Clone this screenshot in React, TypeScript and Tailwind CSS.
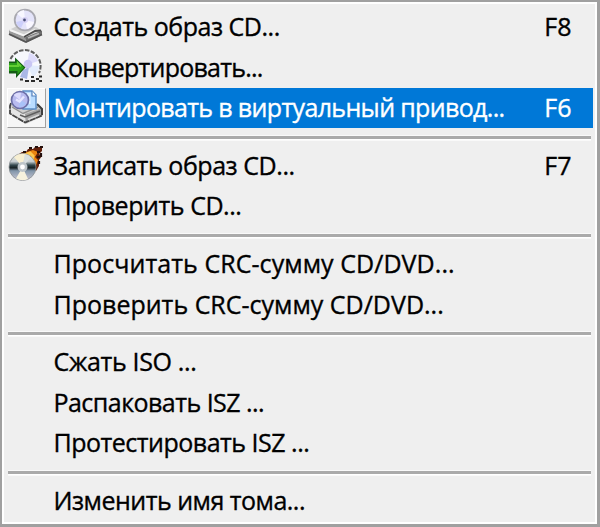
import type { ReactNode } from 'react';
import clsx from 'clsx';

interface MenuItem {
  label: string;
  shortcut?: string;
  icon?: ReactNode;
  active?: boolean;
  tracking?: string;
}

function DriveIcon() {
  return (
    <svg viewBox="0 0 36 36" className="w-9 h-9">
      <path d="M1 22 L9 18 L28 19 L34 23 V27 L18 35 L1 26 Z" fill="#cfcfcf" />
      <path d="M1 22.5 L17 29 V34.5 L1 27 Z" fill="#9a9a9a" />
      <path d="M17 29.5 L34 22.5 V27 L18 34.5 Z" fill="#6e6e6e" />
      <path d="M2 22 L16 27.5 L27 22" fill="none" stroke="#f4f4f4" strokeWidth="2" />
      <path d="M16 29 L27 23 L33 22.5" fill="none" stroke="#4c4c4c" strokeWidth="1.8" />
      <path d="M1 26 L18 34 L34 26.5" fill="none" stroke="#555" strokeWidth="1.8" />
      <path d="M20 30 L31 25.5" stroke="#b8b8b8" strokeWidth="1.8" />
      <circle cx="17" cy="12" r="10.3" fill="#e4e4fa" stroke="#a9a9b0" strokeWidth="1.8" />
      <path d="M17 12 L9 6 A10 10 0 0 1 16 2 Z" fill="#f7f7ff" />
      <path d="M17 12 L19 21 A10 10 0 0 0 26 14 Z" fill="#f9f7ff" />
      <path d="M17 12 L8 14 A9 9 0 0 0 13 20 Z" fill="#cdd0fb" />
      <circle cx="17" cy="12" r="3" fill="#d8d3f6" />
      <circle cx="16.5" cy="12" r="1.4" fill="#4a5078" />
    </svg>
  );
}

function ConvertIcon() {
  return (
    <svg viewBox="0 0 36 36" className="w-9 h-9">
      <circle cx="18" cy="17" r="15" fill="#f7f8fd" />
      <path d="M2.5 11 A15.5 15.5 0 0 1 31 25" fill="none" stroke="#5f5f5f" strokeWidth="2" strokeDasharray="4.5 1.4" />
      <path d="M19 17 L21 5 A13 13 0 0 1 30 13 Z" fill="#dedcfb" />
      <path d="M19 17 L31 18 A14 14 0 0 1 25 29 Z" fill="#e3ecfc" />
      <path d="M15 22 L21 19 L19 31 L12 29 Z" fill="#aab8e6" />
      <circle cx="20" cy="16" r="4.3" fill="#c9c6f4" />
      <path d="M1 13.5 H7 V9.5 L17.5 19.5 L8 30 V25.5 H1 Z" fill="#145c16" />
      <path d="M1 15 H8.5 V12.5 L16 19.5 L9.5 26.5 V23 H1 Z" fill="#2a9f19" />
      <path d="M1 18 H10 V15.5 L13 18.5" fill="none" stroke="#62cf33" strokeWidth="2" />
      <path d="M12 31.5 H15 M17 33 H21 M23 29 H26 M23 33 H27 M31 28.5 H34 M31 33 H34 M28 31 H31" stroke="#2b2b2b" strokeWidth="2" />
    </svg>
  );
}

function MountIcon() {
  return (
    <svg viewBox="0 0 36 36" className="w-9 h-9">
      <path d="M2 16 L12 12 L30 15 L35 20 V27 L18 35 L2 25 Z" fill="#cfcfcf" />
      <path d="M2 17 L17 25 V33 L2 25 Z" fill="#e4e4e4" />
      <path d="M17 25 L34 19 V27 L18 34 Z" fill="#a2a2a2" />
      <path d="M3 14 L2 17 V24.5 L17 33.5 L34 26.5" fill="none" stroke="#444" strokeWidth="1.8" strokeDasharray="6 0.7" />
      <path d="M29 15 L34 20 V26" fill="none" stroke="#3f3f3f" strokeWidth="2" />
      <path d="M4 18 L15 24.5 L30 18" fill="none" stroke="#8f8f8f" strokeWidth="1.4" />
      <path d="M12 26 L17 28 L32 22" fill="none" stroke="#5f5f5f" strokeWidth="1.5" />
      <path d="M20 30.5 L31 26" fill="none" stroke="#ddd" strokeWidth="1.5" />
      <path d="M15 2 H24 L28 6 V20 L15 20 Z" fill="#b9dcff" stroke="#5c8dc6" strokeWidth="1.4" />
      <path d="M19 4 H22.5 V15 H19 Z" fill="#e2f1ff" />
      <path d="M24 2 V7 H28" fill="#fff" stroke="#5580bb" strokeWidth="1.2" />
      <circle cx="12" cy="11" r="8.5" fill="#b9bbef" stroke="#6c6ea6" strokeWidth="1.7" />
      <path d="M12 11 L5.5 6 A8 8 0 0 1 13 4 Z" fill="#dcdbfc" />
      <path d="M12 11 L18 14 A7 7 0 0 1 11 18 Z" fill="#a9c2f8" />
      <path d="M8 10.5 L11.5 12.5 L16 7.5" fill="none" stroke="#e6e6ff" strokeWidth="2.4" />
    </svg>
  );
}

function BurnIcon() {
  return (
    <svg viewBox="0 0 36 36" className="w-9 h-9">
      <defs>
        <linearGradient id="disc" x1="0" y1="0" x2="0" y2="1">
          <stop offset="0" stopColor="#f2efe0" />
          <stop offset="0.3" stopColor="#c5cdd0" />
          <stop offset="0.43" stopColor="#33484e" />
          <stop offset="0.53" stopColor="#172224" />
          <stop offset="0.64" stopColor="#8296aa" />
          <stop offset="1" stopColor="#ccc9d6" />
        </linearGradient>
      </defs>
      <path d="M8 10 L14 6 L18 6 L20 3 L25 3 L27 1 L34 1 V5 L31 8 L34 10 L31 14 V20 L28 25 Z" fill="#64200a" />
      <path d="M12 9 L19 6 L25 4 L30 6 L27 11 L30 14 L27 22 Z" fill="#ec8411" />
      <path d="M15 10 L22 7 L25 10 L24 14 L26 18" fill="none" stroke="#ffc84f" strokeWidth="3" />
      <path d="M21 2 H24 M27 1 H30 M32 1 H35 M29 6 H32 M33 7 V11 M29 11 H32 M31 15 V18 M15 6 H18" stroke="#24100d" strokeWidth="2.2" />
      <circle cx="14.5" cy="21" r="13.5" fill="url(#disc)" stroke="#8a8f92" strokeWidth="0.8" />
      <path d="M14.5 21 L6 11 A13 13 0 0 1 17 8 Z" fill="#f7efd2" />
      <path d="M14.5 21 L17 8 A13 13 0 0 1 23 11.5 Z" fill="#d9dfe0" />
      <path d="M14.5 21 L8 32.5 A13.5 13.5 0 0 0 20 33 Z" fill="#f6f2de" />
      <circle cx="14.5" cy="21" r="5" fill="#bdc5ca" />
      <circle cx="14.5" cy="21" r="2.4" fill="#fff" />
    </svg>
  );
}

const groups: MenuItem[][] = [
  [
    { label: 'Создать образ CD...', shortcut: 'F8', icon: <DriveIcon />, tracking: 'tracking-[-0.48px]' },
    { label: 'Конвертировать...', icon: <ConvertIcon />, tracking: 'tracking-[-0.78px]' },
    {
      label: 'Монтировать в виртуальный привод...',
      shortcut: 'F6',
      icon: <MountIcon />,
      active: true,
      tracking: 'tracking-[-0.65px]',
    },
  ],
  [
    { label: 'Записать образ CD...', shortcut: 'F7', icon: <BurnIcon />, tracking: 'tracking-[-0.44px]' },
    { label: 'Проверить CD...', tracking: 'tracking-[-0.45px]' },
  ],
  [
    { label: 'Просчитать CRC-сумму CD/DVD...', tracking: 'tracking-[0.06px]' },
    { label: 'Проверить CRC-сумму CD/DVD...' },
  ],
  [
    { label: 'Сжать ISO ...', tracking: 'tracking-[-0.33px]' },
    { label: 'Распаковать ISZ ...', tracking: 'tracking-[-0.53px]' },
    { label: 'Протестировать ISZ ...', tracking: 'tracking-[-0.5px]' },
  ],
  [{ label: 'Изменить имя тома...', tracking: 'tracking-[-0.5px]' }],
];

function Row({ item }: { item: MenuItem }) {
  return (
    <div className="flex h-[40.5px] pl-[3px] pr-[2px]">
      <div
        className={clsx(
          'w-[39px] shrink-0 border',
          item.active ? 'bg-[#f6f6f6] border-t-white border-l-white border-r-[#a0a0a0] border-b-[#a0a0a0]' : 'border-transparent'
        )}
      >
        <div>{item.icon}</div>
      </div>
      <div
        className={clsx(
          'ml-[3px] flex flex-1 items-center justify-between pl-[4.5px] pr-[21.5px] text-[25px] leading-none whitespace-nowrap [-webkit-text-stroke:0.35px]',
          item.active ? 'bg-[#0078d7] text-white' : 'text-black'
        )}
      >
        <span className={item.tracking}>{item.label}</span>
        <span>{item.shortcut}</span>
      </div>
    </div>
  );
}

export default function App() {
  return (
    <div className="w-[600px] h-[527px] overflow-hidden border-2 border-r-[3px] border-b-[3px] border-[#a0a0a0] bg-white p-[2px] font-['Open_Sans','Noto_Sans',sans-serif]">
      <div className="h-full bg-[#efefef] pt-[2.5px]">
        {groups.map((group, i) => (
          <div key={i}>
            {i > 0 && (
              <div className="h-[17.2px] pt-[7px] pl-[4px] pr-[4px]">
                <div className="h-[6px] border-y border-[#f9f9f9] bg-white">
                  <div className="h-[3px] bg-[#aaaaaa]" />
                </div>
              </div>
            )}
            {group.map((item) => (
              <Row key={item.label} item={item} />
            ))}
          </div>
        ))}
      </div>
    </div>
  );
}
